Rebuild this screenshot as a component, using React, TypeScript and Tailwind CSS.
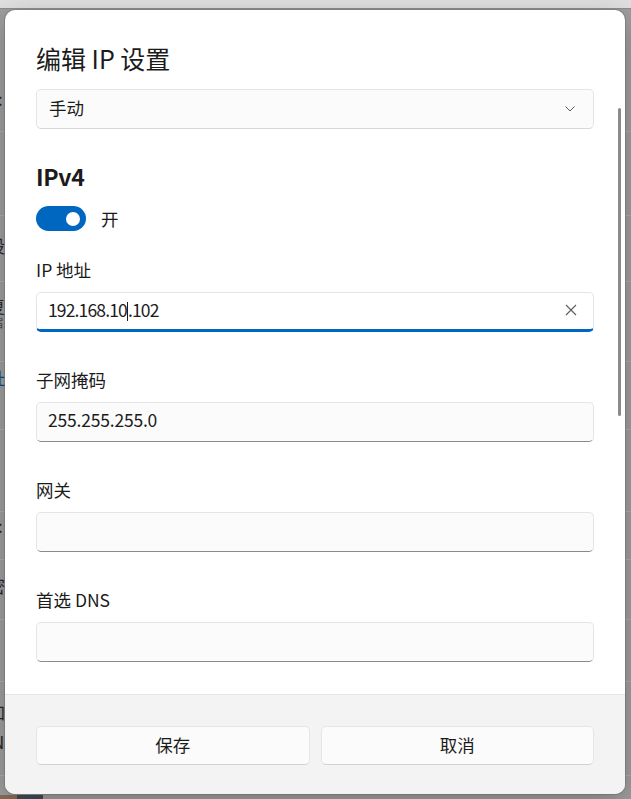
import React from 'react';

function Field({ label, value, focused }: { label: string; value?: string; focused?: boolean }) {
  return (
    <div className="mt-[36px]">
      <div className="text-[17.5px] leading-[24px] text-[#1b1b1b]">{label}</div>
      {focused ? (
        <div className="mt-[10px] flex h-[40px] items-center rounded-[5px] border border-[#e5e5e5] border-b-[3px] border-b-[#0067c0] bg-white pb-[2px] pl-[11px] pr-[16px] text-[17.5px] text-[#1b1b1b]">
          <span className="flex-1 tracking-[-0.85px]">
            192.168.10
            <span className="inline-block h-[19px] w-px bg-[#1b1b1b] align-[-4px]" />
            .102
          </span>
          <svg width="12" height="12" viewBox="0 0 12 12" className="shrink-0">
            <path d="M1 1 L11 11 M11 1 L1 11" stroke="#5c5c5c" strokeWidth="1.1" fill="none" />
          </svg>
        </div>
      ) : (
        <div className="mt-[10px] flex h-[40px] items-center rounded-[5px] border border-[#e5e5e5] border-b-[#8a8a8a] bg-[#fbfbfb] pb-[3px] pl-[11px] text-[17.5px] tracking-[-0.2px] text-[#1b1b1b]">
          {value}
        </div>
      )}
    </div>
  );
}

export default function App() {
  return (
    <div className="relative h-[799px] w-[631px] overflow-hidden bg-[#9f9f9f] font-['Noto_Sans_CJK_SC',sans-serif]">
      {/* dimmed settings window behind the dialog */}
      <div className="h-[9px] border-b border-[#8e8e8e] bg-[#e1e1e1]" />
      <div className="flex flex-col text-[17px] leading-[20px] text-[#262626]">
        <div className="h-[123px] border-b border-[#adadad] pt-[80px]">
          <span className="-ml-[2px] block">:</span>
        </div>
        <div className="h-[84px] border-b border-[#adadad]" />
        <div className="h-[66px] border-b border-[#adadad] pt-[20px]">
          <span className="-ml-[12px] block">设</span>
        </div>
        <div className="h-[80px] border-b border-[#adadad] pt-[14px]">
          <span className="-ml-[12px] block">复</span>
          <span className="-ml-[9px] block text-[12px] leading-[14px] text-[#4a4a4a]">缩</span>
        </div>
        <div className="h-[68px] border-b border-[#adadad] pt-[6px]">
          <span className="-ml-[12px] block text-[#0b4a86]">址</span>
        </div>
        <div className="h-[82px] border-b border-[#adadad]" />
        <div className="h-[48px] border-b border-[#adadad] pt-[4px]">
          <span className="-ml-[2px] block">:</span>
        </div>
        <div className="h-[60px] border-b border-[#adadad] pt-[16px]">
          <span className="-ml-[12px] block">密</span>
        </div>
        <div className="h-[62px] border-b border-[#adadad]" />
        <div className="h-[94px] border-b border-[#adadad] pt-[20px]">
          <span className="-ml-[12px] block">加</span>
          <span className="-ml-[8px] mt-[10px] block">N</span>
        </div>
        <div className="flex h-[30px]">
          <div className="mt-[19px] h-[11px] w-[17px] bg-[#8a6d55]" />
          <div className="mt-[19px] h-[11px] w-[26px] bg-[#3f4d57]" />
        </div>
      </div>

      {/* dialog */}
      <div className="absolute left-[5px] top-[10px] flex h-[784px] w-[620px] flex-col overflow-hidden rounded-[10px] bg-white shadow-[0_0_0_1px_rgba(0,0,0,0.12),0_8px_30px_rgba(0,0,0,0.25)]">
        <div className="relative flex-1 overflow-hidden px-[31px] pt-[32px]">
          <h1 className="text-[25px] leading-[32px] text-[#1b1b1b]">编辑 IP 设置</h1>

          <div className="mt-[15px] flex h-[40px] items-center justify-between rounded-[5px] border border-[#e5e5e5] border-b-[#d6d6d6] bg-[#fbfbfb] pb-[1px] pl-[12px] pr-[18px] text-[17.5px] text-[#1b1b1b]">
            <span>手动</span>
            <svg width="10" height="6" viewBox="0 0 10 6">
              <path d="M0.5 0.5 L5 5 L9.5 0.5" stroke="#5c5c5c" strokeWidth="1" fill="none" />
            </svg>
          </div>

          <h2 className="mt-[32px] text-[23px] font-semibold leading-[30px] tracking-[-0.3px] text-[#1b1b1b]">IPv4</h2>

          <div className="mt-[15px] flex items-center gap-[15px]">
            <div className="flex h-[25px] w-[50px] items-center justify-end rounded-full bg-[#0067c0] pr-[6px]">
              <div className="h-[14px] w-[14px] rounded-full bg-white" />
            </div>
            <span className="text-[17.5px] leading-[24px] text-[#1b1b1b]">开</span>
          </div>

          <div className="-mt-[9px]">
            <Field label="IP 地址" focused />
            <Field label="子网掩码" value="255.255.255.0" />
            <Field label="网关" />
            <Field label="首选 DNS" />
          </div>

          <div className="absolute right-[4px] top-[98px] h-[308px] w-[3px] rounded-full bg-[#8b8b8b]" />
        </div>

        <div className="grid h-[100px] shrink-0 grid-cols-2 gap-[11px] border-t border-[#e5e5e5] bg-[#f3f3f3] px-[31px] pt-[31px]">
          <button className="h-[39px] rounded-[5px] border border-[#e5e5e5] border-b-[#d2d2d2] bg-[#fbfbfb] text-[17.5px] text-[#1b1b1b]">
            保存
          </button>
          <button className="h-[39px] rounded-[5px] border border-[#e5e5e5] border-b-[#d2d2d2] bg-[#fbfbfb] text-[17.5px] text-[#1b1b1b]">
            取消
          </button>
        </div>
      </div>
    </div>
  );
}
